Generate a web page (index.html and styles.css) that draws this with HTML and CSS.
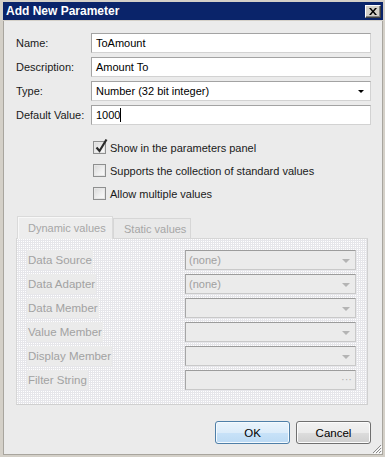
FILE: index.html
```html
<!DOCTYPE html>
<html>
<head>
<meta charset="utf-8">
<link rel="stylesheet" href="styles.css">
</head>
<body>
<div class="window">
  <div class="titlebar">
    <span class="title">Add New Parameter</span>
    <span class="close"><svg width="8" height="7" viewBox="0 0 8 7"><path d="M0 0h2l2 2.5L6 0h2L5 3.5 8 7H6L4 4.5 2 7H0l3-3.5z" fill="#000"/></svg></span>
  </div>
  <div class="client">
    <div class="form">
      <div class="row"><span class="label">Name:</span><div class="field">ToAmount</div></div>
      <div class="row"><span class="label">Description:</span><div class="field">Amount To</div></div>
      <div class="row"><span class="label">Type:</span><div class="field select">Number (32 bit integer)<span class="arrow"></span></div></div>
      <div class="row"><span class="label">Default Value:</span><div class="field">1000<span class="caret"></span></div></div>
    </div>
    <div class="checks">
      <div class="check"><span class="box"><svg class="tick" width="14" height="16" viewBox="0 0 14 16"><path d="M2.5 9.5 L5.5 13 L12.5 1.5" fill="none" stroke="#2b2b2b" stroke-width="2.2" stroke-linejoin="miter"/></svg></span><span>Show in the parameters panel</span></div>
      <div class="check"><span class="box"></span><span>Supports the collection of standard values</span></div>
      <div class="check"><span class="box"></span><span>Allow multiple values</span></div>
    </div>
    <div class="tabs">
      <div class="tabstrip">
        <div class="tab active">Dynamic values</div>
        <div class="tab">Static values</div>
      </div>
      <div class="tabpage">
        <div class="prow"><span class="plabel">Data Source</span><div class="combo">(none)<span class="darrow"></span></div></div>
        <div class="prow"><span class="plabel">Data Adapter</span><div class="combo">(none)<span class="darrow"></span></div></div>
        <div class="prow"><span class="plabel">Data Member</span><div class="combo"><span class="darrow"></span></div></div>
        <div class="prow"><span class="plabel">Value Member</span><div class="combo"><span class="darrow"></span></div></div>
        <div class="prow"><span class="plabel">Display Member</span><div class="combo"><span class="darrow"></span></div></div>
        <div class="prow"><span class="plabel">Filter String</span><div class="combo"><span class="dots">···</span></div></div>
      </div>
    </div>
    <div class="buttons">
      <div class="btn ok">OK</div>
      <div class="btn">Cancel</div>
    </div>
    <svg class="grip" width="10" height="10" viewBox="0 0 10 10">
      <path d="M9 1 L1 9 M9 4 L4 9 M9 7 L7 9" stroke="#8a8a8a" stroke-width="1"/>
      <path d="M10 2 L2 10 M10 5 L5 10 M10 8 L8 10" stroke="#ffffff" stroke-width="1"/>
    </svg>
  </div>
</div>
</body>
</html>
```

FILE: styles.css
```css
* { box-sizing: border-box; }
html, body { margin: 0; padding: 0; }
body {
  background: #d4d0c8;
  font-family: "Liberation Sans", Arial, sans-serif;
  font-size: 11px;
  color: #1a1a1a;
}
.window {
  width: 385px;
  height: 457px;
  padding: 2px 2px 2px 3px;
  background: #d4d0c8;
  display: flex;
  flex-direction: column;
}
.titlebar {
  height: 18px;
  background: #0a246a;
  display: flex;
  align-items: center;
  justify-content: space-between;
  padding: 0 2px 0 3px;
}
.title {
  color: #fff;
  font-weight: bold;
  font-size: 12px;
}
.close {
  width: 16px;
  height: 13px;
  background: #d4d0c8;
  border: 1px solid;
  border-color: #fff #404040 #404040 #fff;
  box-shadow: inset -1px -1px #808080;
  display: flex;
  align-items: center;
  justify-content: center;
  padding-right: 1px;
}
.client {
  position: relative;
  flex: 1;
  margin-top: 1px;
  background: #ebebeb;
  border-left: 1px solid #a8a59e;
  border-right: 1px solid #a8a59e;
  border-bottom: 1px solid #a8a59e;
  display: flex;
  flex-direction: column;
}
.form {
  margin-top: 12px;
  padding-left: 12px;
  display: flex;
  flex-direction: column;
  gap: 4px;
}
.row {
  display: flex;
  align-items: center;
  height: 20px;
}
.label {
  width: 75px;
}
.field {
  position: relative;
  width: 280px;
  height: 20px;
  background: #fff;
  border: 1px solid;
  border-color: #a3a3a3 #d2d2d2 #d2d2d2 #a3a3a3;
  padding-left: 4px;
  display: flex;
  align-items: center;
  color: #000;
}
.select .arrow {
  position: absolute;
  right: 6px;
  top: 8px;
  width: 0;
  height: 0;
  border-left: 3px solid transparent;
  border-right: 3px solid transparent;
  border-top: 3px solid #000;
}
.caret {
  display: inline-block;
  width: 1px;
  height: 14px;
  background: #000;
  margin-left: 0;
}
.checks {
  margin-top: 11px;
  padding-left: 89px;
  display: flex;
  flex-direction: column;
}
.check {
  height: 23px;
  display: flex;
  align-items: center;
  gap: 4px;
}
.box {
  position: relative;
  width: 13px;
  height: 13px;
  border: 1px solid #8e8f8f;
  background: linear-gradient(135deg, #d8d8d8 0%, #f0f0f0 60%, #fbfbfb 100%);
  box-shadow: inset 0 0 0 1px #e6e6e6;
}
.tick {
  position: absolute;
  left: 0;
  top: -4px;
}
.tabs {
  margin-top: 11px;
  margin-left: 12px;
  width: 352px;
}
.tabstrip {
  display: flex;
  align-items: flex-end;
  height: 22px;
  padding-left: 1px;
  position: relative;
  z-index: 1;
}
.tab {
  color: #a6a6a6;
  border: 1px solid #d6d6d6;
  border-bottom: none;
  background: #e9e9e9;
  height: 20px;
  display: flex;
  align-items: center;
  padding-left: 10px;
  width: 78px;
}
.tab.active {
  height: 23px;
  width: 96px;
  margin-bottom: -1px;
  background: #ededed;
  box-shadow: inset 1px 1px #f8f8f8;
  border-color: #dadada;
}
.tabpage {
  height: 167px;
  border: 1px solid #d6d6d6;
  border-right-color: #cfcfcf;
  border-bottom-color: #cfcfcf;
  background-color: #e6e6ea;
  background-image: conic-gradient(at 1px 1px, transparent 0 270deg, #ffffff 270deg 360deg);
  background-size: 2px 2px;
  padding: 11px 11px 0 10px;
  display: flex;
  flex-direction: column;
  gap: 4px;
}
.prow {
  height: 20px;
  display: flex;
  align-items: center;
  justify-content: space-between;
}
.plabel {
  background: #ebebeb;
  color: #a2a2a2;
  padding: 0 1px;
  height: 20px;
  display: flex;
  align-items: center;
  font-size: 11.5px;
}
.combo {
  position: relative;
  width: 171px;
  height: 20px;
  background: #ebebeb;
  border: 1px solid;
  border-color: #9c9c9c #c9c9c9 #c9c9c9 #a6a6a6;
  color: #a0a0a0;
  padding-left: 3px;
  display: flex;
  align-items: center;
}
.darrow {
  position: absolute;
  right: 5px;
  top: 8px;
  width: 0;
  height: 0;
  border-left: 4px solid transparent;
  border-right: 4px solid transparent;
  border-top: 4px solid #b4b4b4;
}
.dots {
  position: absolute;
  right: 3px;
  top: 2px;
  color: #b0b0b0;
  font-size: 11px;
  letter-spacing: 0;
}
.buttons {
  margin-top: 16px;
  display: flex;
  justify-content: flex-end;
  gap: 6px;
  padding-right: 11px;
}
.btn {
  width: 75px;
  height: 23px;
  border: 1px solid #707070;
  border-radius: 3px;
  background: linear-gradient(#f2f2f2 0%, #ebebeb 50%, #dddddd 51%, #cfcfcf 100%);
  box-shadow: inset 0 0 0 1px #fcfcfc;
  display: flex;
  align-items: center;
  justify-content: center;
  color: #000;
  font-size: 11.5px;
}
.btn.ok {
  border-color: #4f7fa8;
  background: linear-gradient(#eaf4fc 0%, #dcecfa 50%, #c8e2f8 51%, #bcdaf4 100%);
  box-shadow: inset 0 0 0 1px #f4fafe;
}
.grip {
  position: absolute;
  right: 0;
  bottom: 0;
}
```
